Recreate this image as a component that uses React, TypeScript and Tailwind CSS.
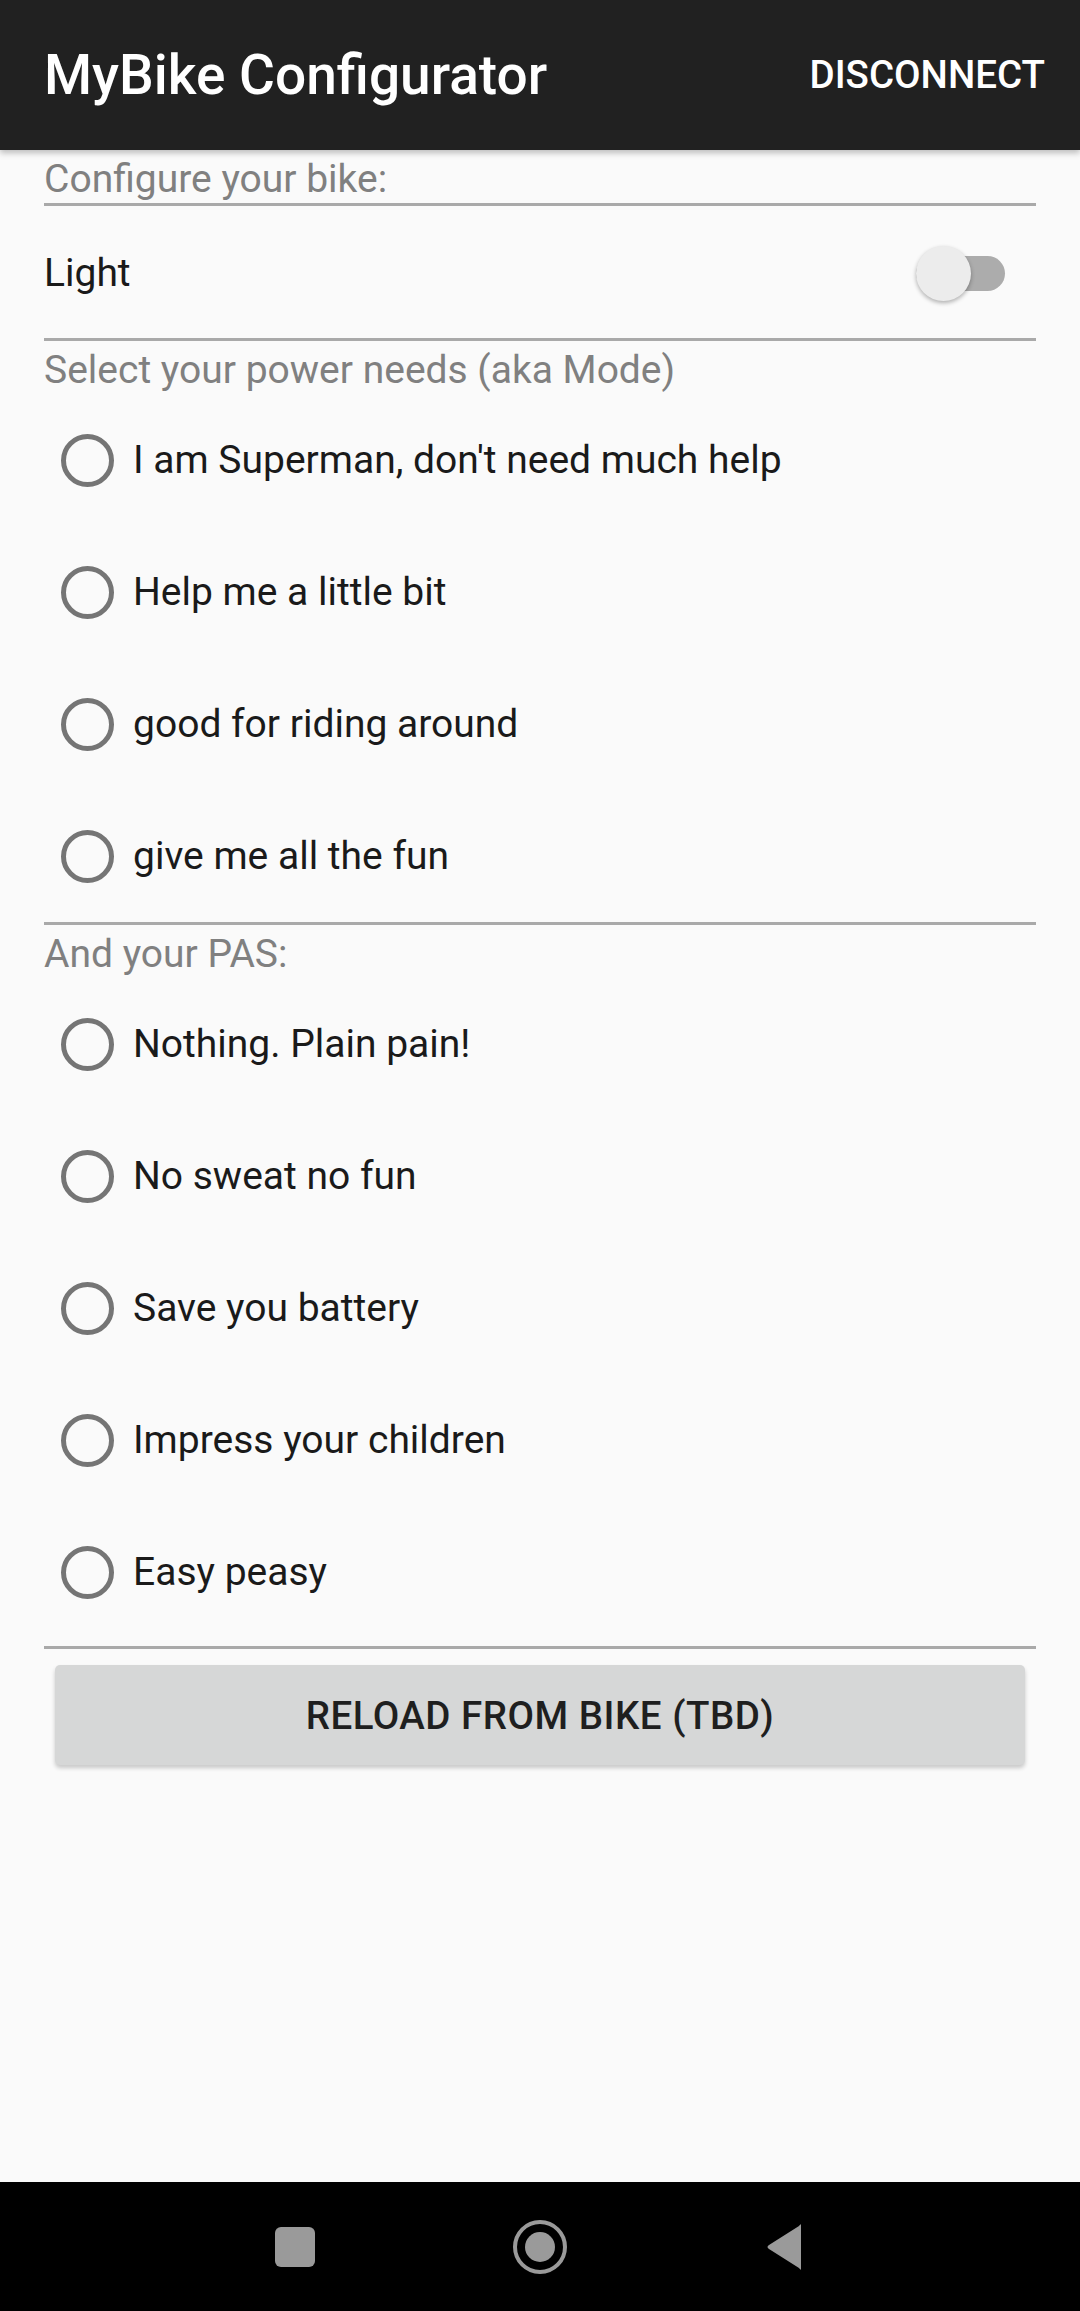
import React from "react";

const font = { fontFamily: "Roboto, 'Noto Sans', sans-serif" };

function Divider() {
  return <div className="h-[3px] bg-[#a9a9a9] w-full" />;
}

function Label({ text }: { text: string }) {
  return (
    <div className="h-[53px] pt-[5px] flex items-center text-[39px] text-[#808080] leading-none">
      {text}
    </div>
  );
}

function Radio({ text }: { text: string }) {
  return (
    <div className="h-[132px] flex items-center">
      <div className="ml-[17px] w-[53px] h-[53px] rounded-full border-[5px] border-[#757575] shrink-0" />
      <span className="ml-[19px] text-[39px] text-[#1a1a1a] leading-none">{text}</span>
    </div>
  );
}

export default function App() {
  const modes = [
    "I am Superman, don't need much help",
    "Help me a little bit",
    "good for riding around",
    "give me all the fun",
  ];
  const pas = [
    "Nothing. Plain pain!",
    "No sweat no fun",
    "Save you battery",
    "Impress your children",
    "Easy peasy",
  ];
  return (
    <div className="w-[1080px] h-[2311px] flex flex-col bg-[#fafafa]" style={font}>
      <header className="h-[150px] bg-[#212121] flex items-center justify-between pl-[44px] pr-[35px] shadow-[0_3px_6px_rgba(0,0,0,0.25)] relative z-10">
        <span className="text-white text-[55px] font-medium">MyBike Configurator</span>
        <span className="text-white text-[38.5px] font-medium">DISCONNECT</span>
      </header>
      <main className="flex-1 flex flex-col px-[44px]">
        <Label text="Configure your bike:" />
        <Divider />
        <div className="h-[132px] pt-[2px] flex items-center justify-between">
          <span className="text-[39px] text-[#1a1a1a] leading-none">Light</span>
          <div className="relative w-[89px] h-[55px] mr-[31px]">
            <div className="absolute left-0 right-0 top-[10px] h-[35px] rounded-full bg-[#acacac]" />
            <div className="absolute left-0 top-0 w-[55px] h-[55px] rounded-full bg-[#ececec] shadow-[0_2px_4px_rgba(0,0,0,0.3)]" />
          </div>
        </div>
        <Divider />
        <Label text="Select your power needs (aka Mode)" />
        {modes.map((m) => (
          <Radio key={m} text={m} />
        ))}
        <Divider />
        <Label text="And your PAS:" />
        {pas.map((m) => (
          <Radio key={m} text={m} />
        ))}
        <div className="h-[8px]" />
        <Divider />
        <div className="mt-[16px] mx-[11px] h-[100px] rounded-[5px] bg-[#d6d7d7] shadow-[0_3px_4px_rgba(0,0,0,0.2)] flex items-center justify-center">
          <span className="pt-[2px] text-[38.5px] font-medium tracking-[0.5px] text-[#1f1f1f]">RELOAD FROM BIKE (TBD)</span>
        </div>
      </main>
      <nav className="h-[129px] bg-black flex items-center justify-center relative">
        <div className="flex items-center">
          <div className="w-[40px] h-[40px] rounded-[6px] bg-[#9a9a9a]" />
          <div className="ml-[198px] w-[54px] h-[54px] rounded-full border-[4px] border-[#9a9a9a] flex items-center justify-center">
            <div className="w-[30px] h-[30px] rounded-full bg-[#9a9a9a]" />
          </div>
          <svg className="ml-[198px]" width="40" height="48" viewBox="0 0 40 48">
            <path d="M36 2 L36 46 Q36 48 34 45 L4 26 Q1 24 4 22 L34 3 Q36 0 36 2 Z" fill="#9a9a9a" />
          </svg>
        </div>
      </nav>
    </div>
  );
}
